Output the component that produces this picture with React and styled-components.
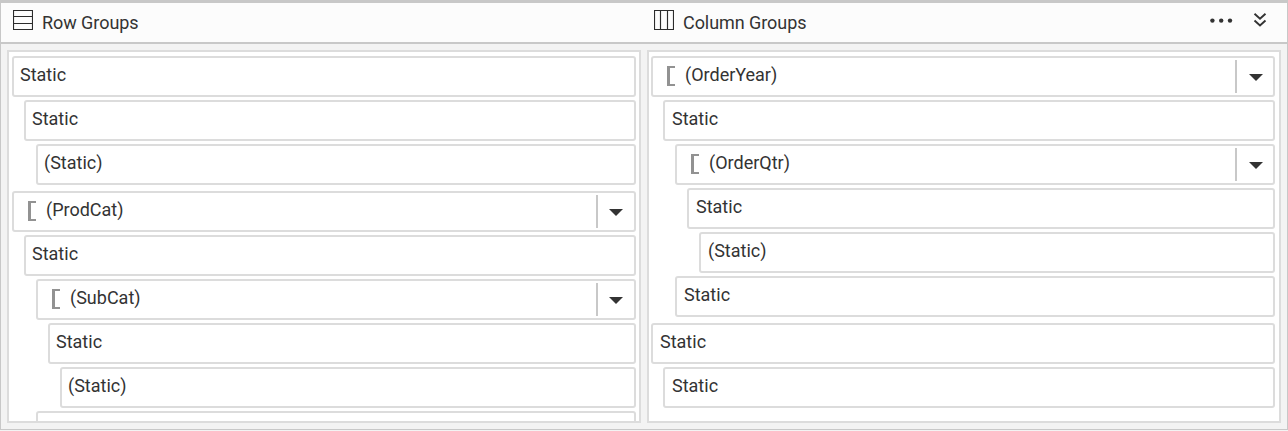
import React from 'react';
import styled, { createGlobalStyle } from 'styled-components';

const GlobalStyle = createGlobalStyle`
  * { box-sizing: border-box; }
  body { margin: 0; background: #f3f3f3; font-family: Roboto, "Liberation Sans", sans-serif; }
`;

const Frame = styled.div`
  width: 1288px;
  height: 430px;
  display: flex;
  flex-direction: column;
  border: 1px solid #c8c8c8;
  border-top-width: 3px;
  background: #f3f3f3;
  color: #333;
  font-size: 18px;
`;

const Header = styled.header`
  flex: none;
  height: 41px;
  display: flex;
  background: #fcfcfc;
  border-bottom: 2px solid #c8c8c8;
`;

const Heading = styled.div`
  width: ${(p) => p.$width}px;
  padding: 7px 0 0 12px;
  display: flex;
  gap: 9px;

  svg { flex: none; }
`;

const Title = styled.span`
  line-height: 26px;
  letter-spacing: -0.06px;
`;

const Actions = styled.div`
  margin-left: auto;
  padding: 9px 20px 0 0;
  display: flex;
  gap: 19px;
`;

const Body = styled.main`
  flex: 1;
  min-height: 0;
  padding: 6px 6px;
  display: flex;
  gap: 6px;
`;

const Panel = styled.section`
  width: 634px;
  height: 373px;
  padding: ${(p) => p.$pad};
  border: 2px solid #dcdcdc;
  background: #fff;
  overflow: hidden;
`;

const Cell = styled.div`
  height: 41px;
  margin: 0 0 ${(p) => (p.$last ? 6 : 3)}px ${(p) => p.$level * 12}px;
  padding-left: ${(p) => (p.$group ? 14 : p.$inset)}px;
  display: flex;
  border: 2px solid #dcdcdc;
  border-radius: 3px;
  background: #fff;
  line-height: 34px;
`;

const Bracket = styled.span`
  flex: none;
  width: 8px;
  height: 20px;
  margin: 8px 10px 0 0;
  border: 2px solid #929292;
  border-left-width: 3px;
  border-right: 0;
`;

const MenuButton = styled.div`
  width: 38px;
  height: 33px;
  margin: 2px 0 0 auto;
  padding: 14px 0 0 ${(p) => p.$caretInset}px;
  border-left: 2px solid #c8c8c8;
  line-height: 0;
`;

const RowsIcon = () => (
  <svg width="20" height="20" viewBox="0 0 20 20" fill="none" stroke="#2b2b2b" strokeWidth="1.15">
    <path d="M.5 .5H19.5V19.5H.5ZM.5 6.5H19.5M.5 13.5H19.5" />
  </svg>
);

const ColumnsIcon = () => (
  <svg width="20" height="20" viewBox="0 0 20 20" fill="none" stroke="#2b2b2b" strokeWidth="1.15">
    <path d="M.5 .5H19.5V19.5H.5ZM6.5 .5V19.5M13.5 .5V19.5" />
  </svg>
);

const MoreIcon = () => (
  <svg width="24" height="18" viewBox="0 0 24 18" fill="#333">
    <circle cx="2.4" cy="8.6" r="2.2" />
    <circle cx="11.2" cy="8.6" r="2.2" />
    <circle cx="20" cy="8.6" r="2.2" />
  </svg>
);

const CollapseIcon = () => (
  <svg width="14" height="16" viewBox="0 0 14 16" fill="none" stroke="#333" strokeWidth="1.9">
    <path d="M1.5 1.7L7 6.7L12.5 1.7M1.5 8.5L7 13.5L12.5 8.5" />
  </svg>
);

const Caret = () => (
  <svg width="14" height="7" viewBox="0 0 14 7" fill="#333">
    <path d="M0 0H14L7 7Z" />
  </svg>
);

const rowGroups = [
  { label: 'Static', level: 0 },
  { label: 'Static', level: 1 },
  { label: '(Static)', level: 2, last: true },
  { label: '(ProdCat)', level: 0, group: true },
  { label: 'Static', level: 1 },
  { label: '(SubCat)', level: 2, group: true },
  { label: 'Static', level: 3 },
  { label: '(Static)', level: 4 },
  { label: '', level: 2 },
];

const columnGroups = [
  { label: '(OrderYear)', level: 0, group: true },
  { label: 'Static', level: 1 },
  { label: '(OrderQtr)', level: 2, group: true },
  { label: 'Static', level: 3 },
  { label: '(Static)', level: 4 },
  { label: 'Static', level: 2, last: true },
  { label: 'Static', level: 0 },
  { label: 'Static', level: 1 },
];

function GroupList({ items, pad, inset, caretInset }) {
  return (
    <Panel $pad={pad}>
      {items.map((item, i) => (
        <Cell key={i} $level={item.level} $group={item.group} $last={item.last} $inset={inset}>
          {item.group && <Bracket />}
          {item.label}
          {item.group && <MenuButton $caretInset={caretInset}><Caret /></MenuButton>}
        </Cell>
      ))}
    </Panel>
  );
}

export default function App() {
  return (
    <>
      <GlobalStyle />
      <Frame>
        <Header>
          <Heading $width={641}><RowsIcon /><Title>Row Groups</Title></Heading>
          <Heading $width={300}><ColumnsIcon /><Title>Column Groups</Title></Heading>
          <Actions><MoreIcon /><CollapseIcon /></Actions>
        </Header>
        <Body>
          <GroupList items={rowGroups} pad="4px 3px 0" inset={6} caretInset={11} />
          <GroupList items={columnGroups} pad="4px 4px 0 2px" inset={7} caretInset={12} />
        </Body>
      </Frame>
    </>
  );
}
